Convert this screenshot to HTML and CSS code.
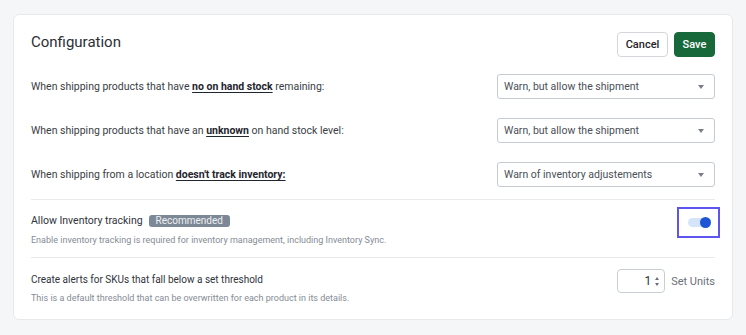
FILE: index.html
```html
<!DOCTYPE html>
<html lang="en">
<head>
<meta charset="utf-8">
<title>Configuration</title>
<link rel="stylesheet" href="styles.css">
</head>
<body>
<div class="card">
  <div class="header">
    <h1 class="title">Configuration</h1>
    <div class="actions">
      <button class="btn btn-cancel">Cancel</button>
      <button class="btn btn-save">Save</button>
    </div>
  </div>

  <div class="rules">
    <div class="rule">
      <div class="rule-label">When shipping products that have <b>no on hand stock</b> remaining:</div>
      <div class="select"><span>Warn, but allow the shipment</span><i class="caret"></i></div>
    </div>
    <div class="rule">
      <div class="rule-label">When shipping products that have an <b>unknown</b> on hand stock level:</div>
      <div class="select"><span>Warn, but allow the shipment</span><i class="caret"></i></div>
    </div>
    <div class="rule">
      <div class="rule-label">When shipping from a location <b>doesn't track inventory:</b></div>
      <div class="select"><span>Warn of inventory adjustements</span><i class="caret"></i></div>
    </div>
  </div>

  <div class="section section-toggle">
    <div class="section-text">
      <div class="section-title">Allow Inventory tracking <span class="badge">Recommended</span></div>
      <div class="section-sub">Enable inventory tracking is required for inventory management, including Inventory Sync.</div>
    </div>
    <div class="toggle-focus">
      <div class="toggle"><span class="knob"></span></div>
    </div>
  </div>

  <div class="section section-threshold">
    <div class="section-text">
      <div class="section-title title-alerts">Create alerts for SKUs that fall below a set threshold</div>
      <div class="section-sub">This is a default threshold that can be overwritten for each product in its details.</div>
    </div>
    <div class="threshold">
      <div class="number">
        <span class="num-value">1</span>
        <span class="spinner"><i class="up"></i><i class="down"></i></span>
      </div>
      <span class="units">Set Units</span>
    </div>
  </div>
</div>
</body>
</html>
```

FILE: styles.css
```css
* { box-sizing: border-box; }

html, body {
  margin: 0;
  padding: 0;
}

body {
  background: #f5f6f8;
  font-family: Roboto, "Liberation Sans", Arial, sans-serif;
  color: #3a3e45;
  padding: 14px 13px 0 13px;
}

.card {
  width: 720px;
  height: 306px;
  background: #ffffff;
  border: 1px solid #e7e9ed;
  border-radius: 6px;
  padding: 17px 17px 0 17px;
}

.header {
  display: flex;
  align-items: center;
  justify-content: space-between;
  height: 25px;
}

.title {
  margin: 0;
  font-size: 15px;
  font-weight: 400;
  color: #2b2f36;
  line-height: 20px;
  margin-top: -5px;
}

.actions {
  display: flex;
  gap: 6px;
}

.btn {
  font-family: inherit;
  font-size: 11px;
  font-weight: 500;
  height: 25px;
  border-radius: 4px;
  padding: 0;
  cursor: pointer;
}

.btn-cancel {
  width: 51px;
  background: #ffffff;
  border: 1px solid #d3d7dc;
  color: #1f232a;
}

.btn-save {
  width: 41px;
  background: #17693c;
  border: 1px solid #17693c;
  color: #ffffff;
}

.rules {
  margin-top: 17px;
  display: flex;
  flex-direction: column;
  gap: 19px;
}

.rule {
  display: flex;
  align-items: center;
  justify-content: space-between;
  height: 25px;
}

.rule-label {
  font-size: 10.5px;
  color: #3a3e45;
}

.rule-label b {
  font-weight: 700;
  color: #1f2630;
  text-decoration: underline;
  text-underline-offset: 2px;
}

.select {
  width: 218px;
  height: 25px;
  border: 1px solid #c6cbd2;
  border-radius: 3px;
  display: flex;
  align-items: center;
  justify-content: space-between;
  padding: 0 10px 0 6px;
  font-size: 10.5px;
  color: #4a4f57;
}

.caret {
  width: 0;
  height: 0;
  border-left: 3.5px solid transparent;
  border-right: 3.5px solid transparent;
  border-top: 4px solid #7a7f86;
}

.section {
  display: flex;
  justify-content: space-between;
  align-items: flex-start;
  border-top: 1px solid #e8eaee;
}

.section-toggle {
  margin-top: 12px;
  height: 58px;
  padding-top: 7px;
}

.section-threshold {
  height: 62px;
  padding-top: 11px;
}

.section-toggle .section-text {
  padding-top: 7px;
}

.section-threshold .section-text {
  padding-top: 4px;
}

.section-title {
  font-size: 10.5px;
  line-height: 14px;
  color: #2f333a;
  display: flex;
  align-items: center;
}

.title-alerts {
  font-size: 10px;
}

.section-sub {
  font-size: 9px;
  line-height: 12px;
  color: #858b94;
  margin-top: 6px;
}

.section-threshold .section-sub {
  margin-top: 5px;
}

.badge {
  display: inline-block;
  margin-left: 6px;
  height: 12px;
  line-height: 12px;
  padding: 0 7px;
  font-size: 10px;
  color: #eef0f3;
  background: #7d8896;
  border-radius: 3px;
}

.toggle-focus {
  width: 43px;
  height: 31px;
  border: 2px solid #5e55f0;
  margin-right: -5px;
  display: flex;
  align-items: center;
  justify-content: center;
  padding-left: 1px;
}

.toggle {
  position: relative;
  width: 22px;
  height: 9px;
  border-radius: 5px;
  background: #d4e5fb;
}

.knob {
  position: absolute;
  right: -1px;
  top: -1px;
  width: 11px;
  height: 11px;
  border-radius: 50%;
  background: #1d55d6;
}

.threshold {
  display: flex;
  align-items: center;
  gap: 6px;
}

.number {
  width: 48px;
  height: 24px;
  border: 1px solid #c9ced4;
  border-radius: 4px;
  display: flex;
  align-items: center;
  justify-content: flex-end;
  padding-right: 5px;
  gap: 4px;
}

.num-value {
  font-size: 12px;
  color: #2b2f36;
}

.spinner {
  display: flex;
  flex-direction: column;
  gap: 3px;
}

.spinner i {
  width: 0;
  height: 0;
  border-left: 2.5px solid transparent;
  border-right: 2.5px solid transparent;
}

.spinner .up { border-bottom: 3px solid #6b7078; }
.spinner .down { border-top: 3px solid #6b7078; }

.units {
  font-size: 11px;
  color: #6b7079;
}
```
